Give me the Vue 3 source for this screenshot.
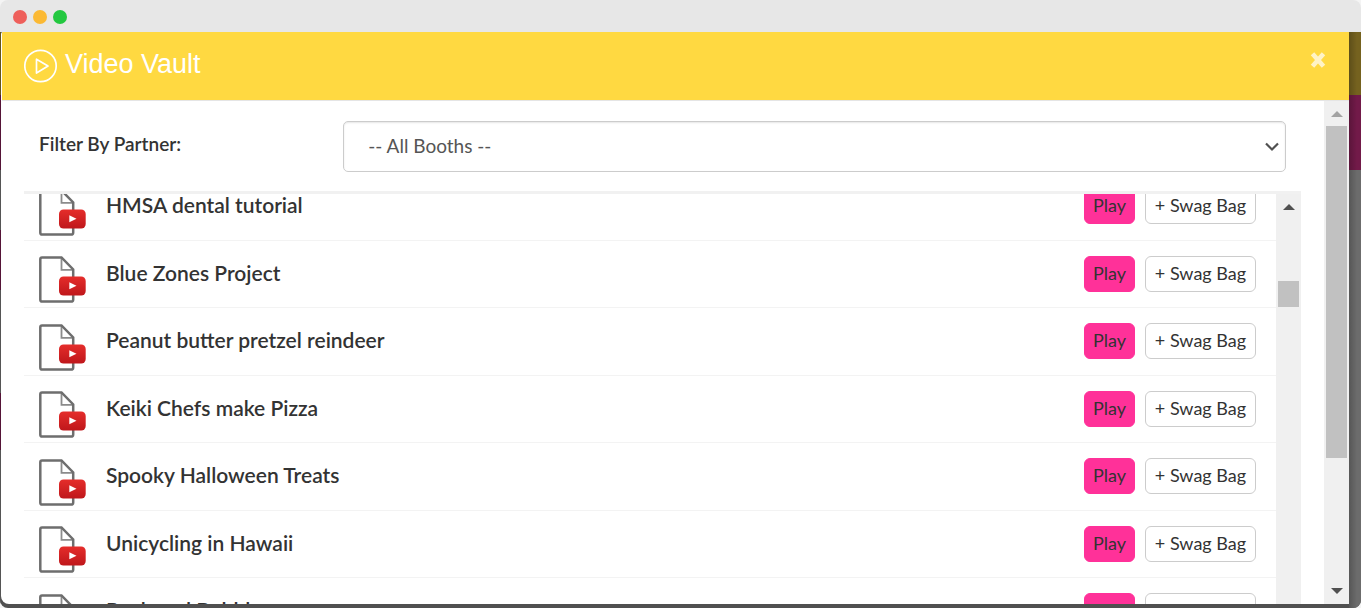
<script setup>
import { ref } from 'vue'

const partner = ref('all')
const videos = [
  'HMSA dental tutorial',
  'Blue Zones Project',
  'Peanut butter pretzel reindeer',
  'Keiki Chefs make Pizza',
  'Spooky Halloween Treats',
  'Unicycling in Hawaii',
  'Rock and Bubbles',
]
</script>

<template>
  <div class="window">
    <header class="titlebar">
      <span class="dot red"></span>
      <span class="dot amber"></span>
      <span class="dot green"></span>
    </header>
    <div class="stage">
      <div class="edge edge-left"></div>
      <section class="modal" role="dialog" aria-labelledby="vault-title">
        <header class="modal-head">
          <svg class="play-icon" viewBox="0 0 34 34" aria-hidden="true">
            <circle cx="16.500" cy="17" r="15.700" />
            <path d="M12.500 10.200v13.900L24 17.100z" />
          </svg>
          <h1 id="vault-title">Video Vault</h1>
          <button class="close" type="button" aria-label="Close">
            <svg viewBox="0 0 18 18" aria-hidden="true"><path d="M3.500 2.800l11 12.400M14.500 2.800l-11 12.400" /></svg>
          </button>
        </header>
        <div class="modal-body">
          <div class="content">
            <div class="filter">
              <label for="partner">Filter By Partner:</label>
              <div class="select-wrap">
                <select id="partner" v-model="partner">
                  <option value="all">-- All Booths --</option>
                </select>
                <svg class="chevron" viewBox="0 0 14 10" aria-hidden="true"><path d="M1 1.5l6 6 6-6" /></svg>
              </div>
            </div>
            <div class="list-frame">
              <ul class="list">
                <li v-for="title in videos" :key="title">
                  <svg class="file" viewBox="0 0 47 47" aria-hidden="true">
                    <defs>
                      <linearGradient id="badge" x1="0" y1="0" x2="0" y2="1">
                        <stop offset="0" stop-color="#e52d2b" />
                        <stop offset="1" stop-color="#bf171b" />
                      </linearGradient>
                    </defs>
                    <path d="M22.500 2v11.800h11" fill="#fff" stroke="#8b8b8b" stroke-width="1.800" />
                    <path d="M34.200 21v-7.500L22.500 1.400H3Q1.300 1.400 1.300 3.200V43.500Q1.300 45.600 3.200 45.600H32Q34.200 45.600 34.200 43.500V39" fill="none" stroke="#6e6e6e" stroke-width="2.500" />
                    <rect x="20" y="20.500" width="26.700" height="19" rx="4.500" fill="url(#badge)" />
                    <path d="M30.300 26.300v7l7.200-3.500z" fill="#fff" />
                  </svg>
                  <h2>{{ title }}</h2>
                  <button class="btn play" type="button">Play</button>
                  <button class="btn swag" type="button">+ Swag Bag</button>
                </li>
              </ul>
              <div class="track inner" aria-hidden="true">
                <svg class="arrow" viewBox="0 0 12 6"><path d="M0 6L6 0l6 6z" /></svg>
                <span class="thumb"></span>
              </div>
            </div>
          </div>
          <div class="track outer" aria-hidden="true">
            <svg class="arrow muted" viewBox="0 0 12 6"><path d="M0 6L6 0l6 6z" /></svg>
            <span class="thumb"></span>
            <svg class="arrow down" viewBox="0 0 12 6"><path d="M0 0l6 6 6-6z" /></svg>
          </div>
        </div>
      </section>
      <div class="edge edge-right"></div>
    </div>
  </div>
</template>

<style>
body {
  background: #f4f4f4;
}
</style>

<style scoped>
* {
  box-sizing: border-box;
}
.window {
  display: flex;
  flex-direction: column;
  height: 100vh;
  overflow: hidden;
  border-radius: 8px;
  font-family: Lato, "Liberation Sans", sans-serif;
  color: #333;
}
.titlebar {
  flex: none;
  display: flex;
  align-items: center;
  gap: 6px;
  height: 32px;
  padding: 2px 13px 0;
  background: #e7e7e7;
}
.dot {
  width: 14px;
  height: 14px;
  border-radius: 50%;
}
.red {
  background: #ee5f5b;
}
.amber {
  background: #fbb934;
}
.green {
  background: #23c840;
}
.stage {
  flex: 1;
  min-height: 0;
  display: flex;
  padding-bottom: 4px;
  background: #505050;
}
.edge {
  flex: none;
  margin-bottom: -4px;
}
.edge-left {
  width: 1px;
  background: linear-gradient(#64541a 63px, #551437 63px 138px, #555 138px 198px, #551437 198px 258px, #555 258px 361px, #551437 361px 418px, #555 418px);
}
.edge-right {
  width: 12px;
  background:
    linear-gradient(90deg, rgba(0, 0, 0, 0.2), transparent 8px),
    linear-gradient(#75621f 63px, #721a49 63px 138px, #6c6c6c 138px);
}
.modal {
  flex: 1;
  min-width: 0;
  display: flex;
  flex-direction: column;
  overflow: hidden;
  border-radius: 2px 0 0 8px;
  background: #fff;
}
.modal-head {
  flex: none;
  display: flex;
  align-items: flex-start;
  height: 69px;
  margin-left: 1px;
  padding: 0 22px;
  border-bottom: 1px solid #e5e5e5;
  background: #ffd941;
}
.play-icon {
  width: 34px;
  height: 34px;
  margin-top: 17px;
  fill: none;
  stroke: #fff;
  stroke-width: 1.7;
  stroke-linejoin: round;
}
h1 {
  flex: 1;
  margin: 16px 0 0 7px;
  font: 400 27px/32px "Liberation Sans", Arial, sans-serif;
  color: #fff;
}
.close {
  display: flex;
  margin-top: 19px;
  padding: 0;
  border: 0;
  background: none;
}
.close svg {
  width: 18px;
  height: 18px;
  fill: none;
  stroke: #fff3c6;
  stroke-width: 4.6;
}
.modal-body {
  flex: 1;
  min-height: 0;
  display: flex;
}
.content {
  flex: 1;
  min-width: 0;
  display: flex;
  flex-direction: column;
  padding: 20px 23px 0;
}
.filter {
  flex: none;
  display: grid;
  grid-template-columns: 25% 1fr;
  margin-bottom: 19px;
}
.filter label {
  padding: 10px 0 0 15px;
  font-size: 19px;
  font-weight: 600;
  line-height: 26px;
}
.select-wrap {
  position: relative;
  margin-right: 15px;
}
select {
  display: block;
  width: 100%;
  height: 51px;
  padding: 0 40px 2px 24px;
  appearance: none;
  border: 1px solid #ccc;
  border-radius: 5px;
  background: #fff;
  box-shadow: inset 0 1px 2px rgba(0, 0, 0, 0.1);
  font: 400 19px/26px Lato, "Liberation Sans", sans-serif;
  color: #555;
}
.chevron {
  position: absolute;
  top: 21px;
  right: 7px;
  width: 14px;
  height: 10px;
  pointer-events: none;
  fill: none;
  stroke: #505050;
  stroke-width: 2.2;
}
.list-frame {
  flex: 1;
  min-height: 0;
  display: flex;
  overflow: hidden;
  border-top: 3px solid #f1f1f1;
}
.list {
  flex: 1;
  min-width: 0;
  margin: -21px 0 0;
  padding: 0;
  list-style: none;
}
.list li {
  display: flex;
  align-items: flex-start;
  height: 68px;
  padding: 15px 20px 0 15px;
  border-bottom: 1px solid #f3f3f3;
}
.list li:nth-child(even) {
  height: 67px;
}
.file {
  flex: none;
  width: 47px;
  height: 47px;
}
.list li:nth-child(odd) .file {
  margin-top: 1px;
}
h2 {
  flex: 1;
  margin: 4px 0 0 20px;
  font-size: 21px;
  font-weight: 600;
  line-height: 26px;
}
.btn {
  height: 36px;
  padding: 0 8px 2px;
  border: 1px solid #ccc;
  border-radius: 6px;
  background: #fff;
  font: 400 18px/26px Lato, "Liberation Sans", sans-serif;
  color: #333;
}
.play {
  width: 51px;
  border-color: #ff3199;
  background: #ff3199;
}
.swag {
  width: 111px;
  margin-left: 10px;
  white-space: nowrap;
}
.track {
  flex: none;
  display: flex;
  flex-direction: column;
  align-items: center;
  width: 25px;
  background: #f0f0f0;
}
.arrow {
  flex: none;
  width: 12px;
  height: 6px;
  margin: 10px 0 9px;
  fill: #505050;
}
.muted {
  fill: #a3a3a3;
}
.down {
  margin: auto 0 10px;
}
.thumb {
  width: 21px;
  background: #c1c1c1;
}
.inner .thumb {
  height: 26px;
  margin-top: 62px;
}
.outer .thumb {
  height: 66%;
}
</style>
